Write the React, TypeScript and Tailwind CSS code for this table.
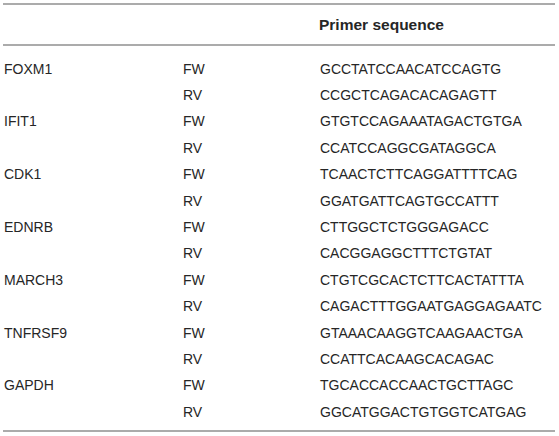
import React from "react";

const rows: [string, string, string][] = [
  ["FOXM1", "FW", "GCCTATCCAACATCCAGTG"],
  ["", "RV", "CCGCTCAGACACAGAGTT"],
  ["IFIT1", "FW", "GTGTCCAGAAATAGACTGTGA"],
  ["", "RV", "CCATCCAGGCGATAGGCA"],
  ["CDK1", "FW", "TCAACTCTTCAGGATTTTCAG"],
  ["", "RV", "GGATGATTCAGTGCCATTT"],
  ["EDNRB", "FW", "CTTGGCTCTGGGAGACC"],
  ["", "RV", "CACGGAGGCTTTCTGTAT"],
  ["MARCH3", "FW", "CTGTCGCACTCTTCACTATTTA"],
  ["", "RV", "CAGACTTTGGAATGAGGAGAATC"],
  ["TNFRSF9", "FW", "GTAAACAAGGTCAAGAACTGA"],
  ["", "RV", "CCATTCACAAGCACAGAC"],
  ["GAPDH", "FW", "TGCACCACCAACTGCTTAGC"],
  ["", "RV", "GGCATGGACTGTGGTCATGAG"],
];

export default function App() {
  return (
    <div
      className="w-[559px] h-[436px] bg-white text-[#262626] pt-[3px] pl-[3px]"
      style={{ fontFamily: '"Liberation Sans", Arial, sans-serif' }}
    >
      <div className="w-[552px]">
        <div className="h-[2px] bg-[#ababab]" />
        <div className="h-[39px] grid grid-cols-[180px_136px_1fr] items-center text-[15.5px] pt-px">
          <div />
          <div />
          <div className="font-bold">Primer sequence</div>
        </div>
        <div className="h-[2px] bg-[#ababab]" />
        <div className="pt-[10px] pb-[5px]">
          {rows.map((r, i) => (
            <div
              key={i}
              className="h-[26.4px] grid grid-cols-[180px_137px_1fr] items-center text-[14px]"
            >
              <div className="pl-px">{r[0]}</div>
              <div>{r[1]}</div>
              <div>{r[2]}</div>
            </div>
          ))}
        </div>
        <div className="h-[2px] bg-[#ababab]" />
      </div>
    </div>
  );
}
